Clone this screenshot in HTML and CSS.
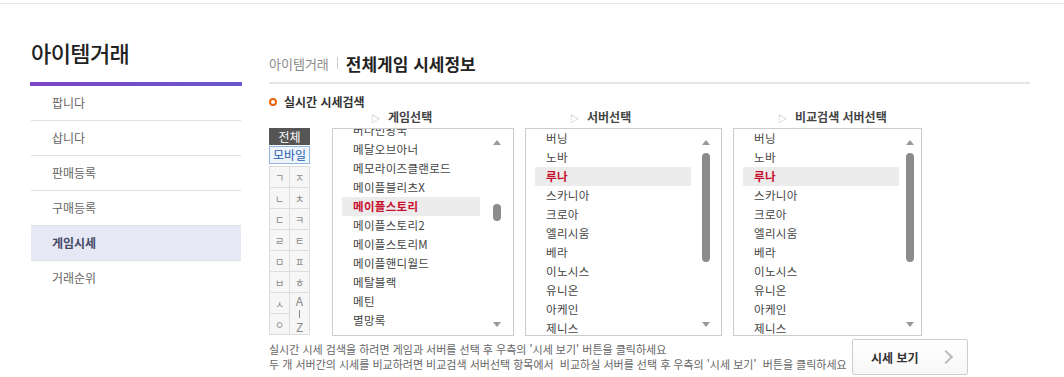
FILE: index.html
```html
<!DOCTYPE html>
<html lang="ko">
<head>
  <meta charset="UTF-8">
  <title>전체게임 시세정보</title>
  <link rel="stylesheet" href="styles.css">
</head>
<body>
  <div class="topline"></div>
  <div class="wrap">
    <!-- Sidebar -->
    <aside class="side">
      <h2 class="side-title">아이템거래</h2>
      <ul class="side-menu">
        <li>팝니다</li>
        <li>삽니다</li>
        <li>판매등록</li>
        <li>구매등록</li>
        <li class="on">게임시세</li>
        <li>거래순위</li>
      </ul>
    </aside>

    <!-- Main -->
    <main class="main">
      <div class="crumb">
        <span class="crumb-parent">아이템거래</span>
        <span class="crumb-sep"></span>
        <span class="crumb-title">전체게임 시세정보</span>
      </div>

      <div class="sub-title"><span class="bullet"></span>실시간 시세검색</div>

      <div class="heads">
        <div class="head head-game"><span class="tri">▷</span>게임선택</div>
        <div class="head head-server"><span class="tri">▷</span>서버선택</div>
        <div class="head head-compare"><span class="tri">▷</span>비교검색 서버선택</div>
      </div>

      <div class="search">
        <div class="index-col">
          <div class="idx-all">전체</div>
          <div class="idx-mobile">모바일</div>
          <div class="idx-grid">
            <span>ㄱ</span><span>ㅈ</span>
            <span>ㄴ</span><span>ㅊ</span>
            <span>ㄷ</span><span>ㅋ</span>
            <span>ㄹ</span><span>ㅌ</span>
            <span>ㅁ</span><span>ㅍ</span>
            <span>ㅂ</span><span>ㅎ</span>
            <span>ㅅ</span>
            <span class="az"><i>A</i><i class="az-line"></i><i>Z</i></span>
            <span>ㅇ</span>
          </div>
        </div>

        <div class="list list-game">
          <ul class="items items-cut">
            <li>버나번왕국</li>
            <li>메달오브아너</li>
            <li>메모라이즈클랜로드</li>
            <li>메이플블리츠X</li>
            <li class="sel">메이플스토리</li>
            <li>메이플스토리2</li>
            <li>메이플스토리M</li>
            <li>메이플핸디월드</li>
            <li>메탈블랙</li>
            <li>메틴</li>
            <li>멸망록</li>
          </ul>
          <div class="bar bar-game">
            <span class="arr-up"></span>
            <div class="track"><span class="thumb thumb-game"></span></div>
            <span class="arr-down"></span>
          </div>
        </div>

        <div class="list list-server">
          <ul class="items">
            <li>버닝</li>
            <li>노바</li>
            <li class="sel">루나</li>
            <li>스카니아</li>
            <li>크로아</li>
            <li>엘리시움</li>
            <li>베라</li>
            <li>이노시스</li>
            <li>유니온</li>
            <li>아케인</li>
            <li>제니스</li>
          </ul>
          <div class="bar bar-server">
            <span class="arr-up"></span>
            <div class="track"><span class="thumb thumb-server"></span></div>
            <span class="arr-down"></span>
          </div>
        </div>

        <div class="list list-compare">
          <ul class="items">
            <li>버닝</li>
            <li>노바</li>
            <li class="sel">루나</li>
            <li>스카니아</li>
            <li>크로아</li>
            <li>엘리시움</li>
            <li>베라</li>
            <li>이노시스</li>
            <li>유니온</li>
            <li>아케인</li>
            <li>제니스</li>
          </ul>
          <div class="bar bar-compare">
            <span class="arr-up"></span>
            <div class="track"><span class="thumb thumb-server"></span></div>
            <span class="arr-down"></span>
          </div>
        </div>
      </div>

      <div class="bottom">
        <div class="notes">
          <p>실시간 시세 검색을 하려면 게임과 서버를 선택 후 우측의 '시세 보기' 버튼을 클릭하세요</p>
          <p>두 개 서버간의 시세를 비교하려면 비교검색 서버선택 항목에서&nbsp; 비교하실 서버를 선택 후 우측의 '시세 보기'&nbsp; 버튼을 클릭하세요</p>
        </div>
        <button class="btn-view">시세 보기<span class="chev"></span></button>
      </div>
    </main>
  </div>
</body>
</html>
```

FILE: styles.css
```css
body {
  margin: 0;
  font-family: "Noto Sans CJK KR", "Noto Sans", sans-serif;
  color: #333;
  background: #fff;
}
ul {
  list-style: none;
  margin: 0;
  padding: 0;
}
p {
  margin: 0;
}
.topline {
  height: 1px;
  margin-top: 3px;
  background: #e6e6e6;
}
.wrap {
  display: flex;
  padding-left: 30px;
}

/* sidebar */
.side {
  width: 212px;
  padding-top: 33px;
}
.side-title {
  margin: 0 0 15px 1px;
  font-size: 22px;
  font-weight: 500;
  line-height: 30px;
  color: #222;
  letter-spacing: -0.6px;
}
.side-menu {
  border-top: 4px solid #7548c6;
  border-image: linear-gradient(to right, #7c45c6, #6a58cc) 1;
  border-left: 1px solid #ddd;
  border-right: 1px solid #ddd;
  border-bottom: 1px solid #ddd;
  border-image-width: 4px 0 0 0;
}
.side-menu li {
  height: 34px;
  line-height: 34px;
  padding-left: 21px;
  font-size: 12px;
  color: #666;
  border-bottom: 1px solid #e0e0e0;
}
.side-menu li:last-child {
  border-bottom: none;
}
.side-menu li.on {
  background: #e6e8f5;
  color: #444a66;
  font-weight: bold;
}

/* main */
.main {
  width: 761px;
  margin-left: 27px;
  padding-top: 47px;
}
.crumb {
  display: flex;
  align-items: center;
  height: 24px;
  padding-bottom: 7px;
  border-bottom: 2px solid #e5e5e5;
}
.crumb-parent {
  font-size: 13px;
  color: #8a8a8a;
}
.crumb-sep {
  width: 1px;
  height: 12px;
  margin: 0 8px;
  background: #ccc;
}
.crumb-title {
  font-size: 17px;
  font-weight: bold;
  color: #222;
}
.sub-title {
  display: flex;
  align-items: center;
  margin-top: 10px;
  line-height: 16px;
  font-size: 12px;
  font-weight: bold;
  color: #333;
}
.bullet {
  width: 4px;
  height: 4px;
  margin-right: 7px;
  border: 2px solid #e8630a;
  border-radius: 50%;
}
.heads {
  display: flex;
  padding-left: 63px;
  line-height: 14px;
  font-size: 12px;
  font-weight: bold;
  color: #444;
}
.head-game {
  width: 154px;
  padding-left: 39px;
}
.head-server {
  width: 163px;
  padding-left: 45px;
}
.head-compare {
  padding-left: 45px;
}
.tri {
  margin-right: 8px;
  font-size: 9px;
  font-weight: normal;
  color: #aaa;
}

/* search area */
.search {
  display: flex;
  margin-top: 2px;
}
.index-col {
  width: 41px;
  margin-right: 22px;
}
.idx-all {
  height: 17px;
  line-height: 17px;
  text-align: center;
  font-size: 12px;
  color: #fff;
  background: #555;
}
.idx-mobile {
  height: 16px;
  margin-top: 1px;
  line-height: 16px;
  text-align: center;
  font-size: 12px;
  color: #2a5dad;
  background: #eef5fd;
  border: 1px solid #8fb5e0;
}
.idx-grid {
  display: grid;
  grid-template-columns: 1fr 1fr;
  grid-auto-rows: 21px;
  margin-top: 2px;
  border-top: 1px solid #ddd;
  border-left: 1px solid #ddd;
}
.idx-grid span {
  display: flex;
  align-items: center;
  justify-content: center;
  font-size: 10px;
  color: #888;
  background: #f6f6f6;
  border-right: 1px solid #ddd;
  border-bottom: 1px solid #ddd;
}
.idx-grid .az {
  grid-row: span 2;
  grid-column: 2;
  flex-direction: column;
  gap: 3px;
  font-size: 12px;
}
.az i {
  font-style: normal;
  line-height: 12px;
}
.az .az-line {
  width: 1px;
  height: 8px;
  background: #888;
}

.list {
  display: flex;
  height: 206px;
  border: 1px solid #ccc;
  overflow: hidden;
}
.list-game {
  width: 180px;
  margin-right: 11px;
}
.list-server {
  width: 195px;
  margin-right: 11px;
}
.list-compare {
  width: 187px;
}
.items {
  flex: 1;
  padding-left: 9px;
}
.items li {
  height: 19px;
  line-height: 19px;
  padding-left: 11px;
  font-size: 11.5px;
  letter-spacing: 0.3px;
  color: #444;
  white-space: nowrap;
}
.items-cut li:first-child {
  margin-top: -8px;
}
.items li.sel {
  background: #ececec;
  color: #c8102e;
  font-weight: bold;
}
.bar {
  display: flex;
  flex-direction: column;
  align-items: center;
  padding: 11px 0 8px;
}
.bar-game {
  width: 33px;
}
.bar-server {
  width: 30px;
}
.bar-compare {
  width: 22px;
}
.track {
  flex: 1;
  display: flex;
  flex-direction: column;
}
.thumb {
  width: 8px;
  border-radius: 4px;
  background: #8c8c8c;
}
.thumb-game {
  height: 17px;
  margin-top: 59px;
}
.thumb-server {
  height: 109px;
  margin-top: 8px;
}
.arr-up,
.arr-down {
  width: 0;
  height: 0;
  border-left: 4px solid transparent;
  border-right: 4px solid transparent;
}
.arr-up {
  border-bottom: 5px solid #999;
}
.arr-down {
  border-top: 5px solid #999;
}

/* bottom */
.bottom {
  display: flex;
  margin-top: 3px;
}
.notes {
  width: 583px;
  padding-top: 3px;
  font-size: 11px;
  line-height: 15px;
  color: #666;
  white-space: nowrap;
}
.btn-view {
  display: flex;
  align-items: center;
  justify-content: space-between;
  width: 116px;
  height: 36px;
  padding: 0 12px 0 18px;
  font-family: inherit;
  font-size: 12px;
  font-weight: bold;
  color: #333;
  background: linear-gradient(#fff, #f7f7f7);
  border: 1px solid #ccc;
  border-radius: 2px;
}
.chev {
  width: 8px;
  height: 8px;
  margin-right: 4px;
  border-top: 2px solid #bbb;
  border-right: 2px solid #bbb;
  transform: rotate(45deg);
}
```
